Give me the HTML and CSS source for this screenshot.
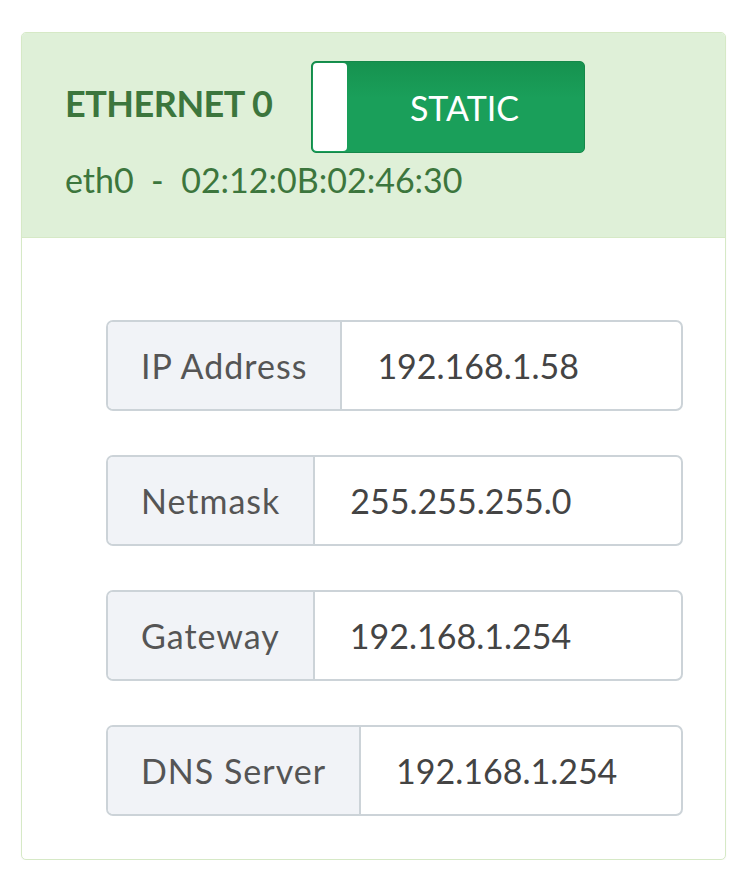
FILE: index.html
```html
<!DOCTYPE html>
<html lang="en">
<head>
  <meta charset="UTF-8" />
  <meta name="viewport" content="width=device-width, initial-scale=1.0"/>
  <title>Network Interface</title>
  <link rel="stylesheet" href="styles.css">
</head>
<body>
  <div class="card" id="eth0">
    <div class="card-head">
      <div class="head-row">
        <h3 class="iface-name">ETHERNET 0</h3>
        <div class="toggle on">
          <span class="knob"></span>
          <span class="toggle-label">STATIC</span>
        </div>
      </div>
      <div class="iface-sub">eth0 &nbsp;-&nbsp; 02:12:0B:02:46:30</div>
    </div>

    <div class="card-body">
      <div class="field">
        <span class="field-label">IP Address</span>
        <span class="field-value">192.168.1.58</span>
      </div>
      <div class="field">
        <span class="field-label">Netmask</span>
        <span class="field-value">255.255.255.0</span>
      </div>
      <div class="field">
        <span class="field-label">Gateway</span>
        <span class="field-value">192.168.1.254</span>
      </div>
      <div class="field">
        <span class="field-label">DNS Server</span>
        <span class="field-value">192.168.1.254</span>
      </div>
    </div>
  </div>
</body>
</html>
```

FILE: styles.css
```css
:root {
  --ok-bg: #dff0d8;
  --ok-border: #d6e9c6;
  --ok-text: #3c763d;
  --toggle: #1a9f5a;
  --addon-bg: #f1f3f7;
  --field-border: #ccd3d8;
  --text: #555;
}

* {
  box-sizing: border-box;
  margin: 0;
  padding: 0;
}

body {
  font-family: Lato, "Open Sans", sans-serif;
  background: #fff;
  color: var(--text);
  padding: 32px 11px 0 21px;
}

.card {
  width: 705px;
  border: 1px solid var(--ok-border);
  border-radius: 5px;
  background: #fff;
  box-shadow: 0 1px 2px rgba(0, 0, 0, 0.04);
}

.card-head {
  background: var(--ok-bg);
  border-bottom: 1px solid var(--ok-border);
  border-radius: 4px 4px 0 0;
  padding: 28px 20px 35px 43px;
  color: var(--ok-text);
}

.head-row {
  display: flex;
  align-items: center;
  gap: 39px;
}

.iface-name {
  font-size: 36px;
  font-weight: 700;
  letter-spacing: -0.5px;
  margin-bottom: 8px;
}

.toggle {
  width: 274px;
  height: 92px;
  display: flex;
  align-items: center;
  background: linear-gradient(#16924f, var(--toggle) 40%);
  border: 1px solid #15884a;
  border-radius: 5px;
  padding: 1px;
}

.knob {
  width: 34px;
  height: 88px;
  background: #fff;
  border-radius: 4px;
  flex: none;
}

.toggle-label {
  flex: 1;
  text-align: center;
  color: #fff;
  font-size: 34px;
  padding-right: 2px;
}

.iface-sub {
  margin-top: 5px;
  font-size: 34px;
  line-height: 44px;
}

.card-body {
  padding: 82px 42px 43px 84px;
  display: flex;
  flex-direction: column;
  gap: 44px;
}

.field {
  display: flex;
  height: 91px;
  border: 2px solid var(--field-border);
  border-radius: 7px;
  overflow: hidden;
  font-size: 34px;
}

.field-label {
  display: flex;
  align-items: center;
  padding: 0 33px;
  background: var(--addon-bg);
  border-right: 2px solid var(--field-border);
  letter-spacing: 1px;
}

.field-value {
  display: flex;
  align-items: center;
  flex: 1;
  padding: 0 35px;
  color: #444;
}
```
